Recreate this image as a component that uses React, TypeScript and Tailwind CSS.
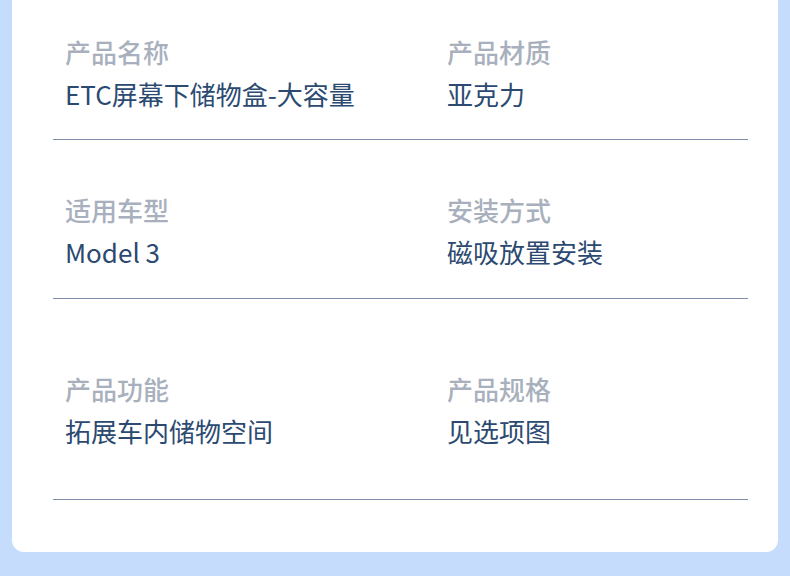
const rows = [
  {
    items: [
      {label: "产品名称", value: "ETC屏幕下储物盒-大容量"},
      {label: "产品材质", value: "亚克力"},
    ],
    pad: "pt-[30px] pb-[25px]",
  },
  {
    items: [
      {label: "适用车型", value: "Model 3"},
      {label: "安装方式", value: "磁吸放置安装"},
    ],
    pad: "pt-[48px] pb-[26px]",
  },
  {
    items: [
      {label: "产品功能", value: "拓展车内储物空间"},
      {label: "产品规格", value: "见选项图"},
    ],
    pad: "pt-[68px] pb-[48px]",
  },
];

export default function App() {
  return (
    <div
      className="h-[576px] w-[790px] overflow-hidden bg-[#c6dcfd] px-[12px] pb-[24px]"
      style={{fontFamily: '"Noto Sans CJK SC", "Noto Sans", sans-serif'}}
    >
      <div className="h-full rounded-b-[12px] bg-white pl-[41px] pr-[30px] pb-[52px]">
        {rows.map((row, i) => (
          <div key={i} className={`grid grid-cols-[382px_1fr] border-b border-[#7e8dab] pl-[12px] ${row.pad}`}>
            {row.items.map((item) => (
              <div key={item.label} className="flex flex-col text-[26px]">
                <span className="font-medium leading-[44px] text-[#a9b0bd]">{item.label}</span>
                <span className="font-normal leading-[40px] text-[#2c4a71]">{item.value}</span>
              </div>
            ))}
          </div>
        ))}
      </div>
    </div>
  );
}
